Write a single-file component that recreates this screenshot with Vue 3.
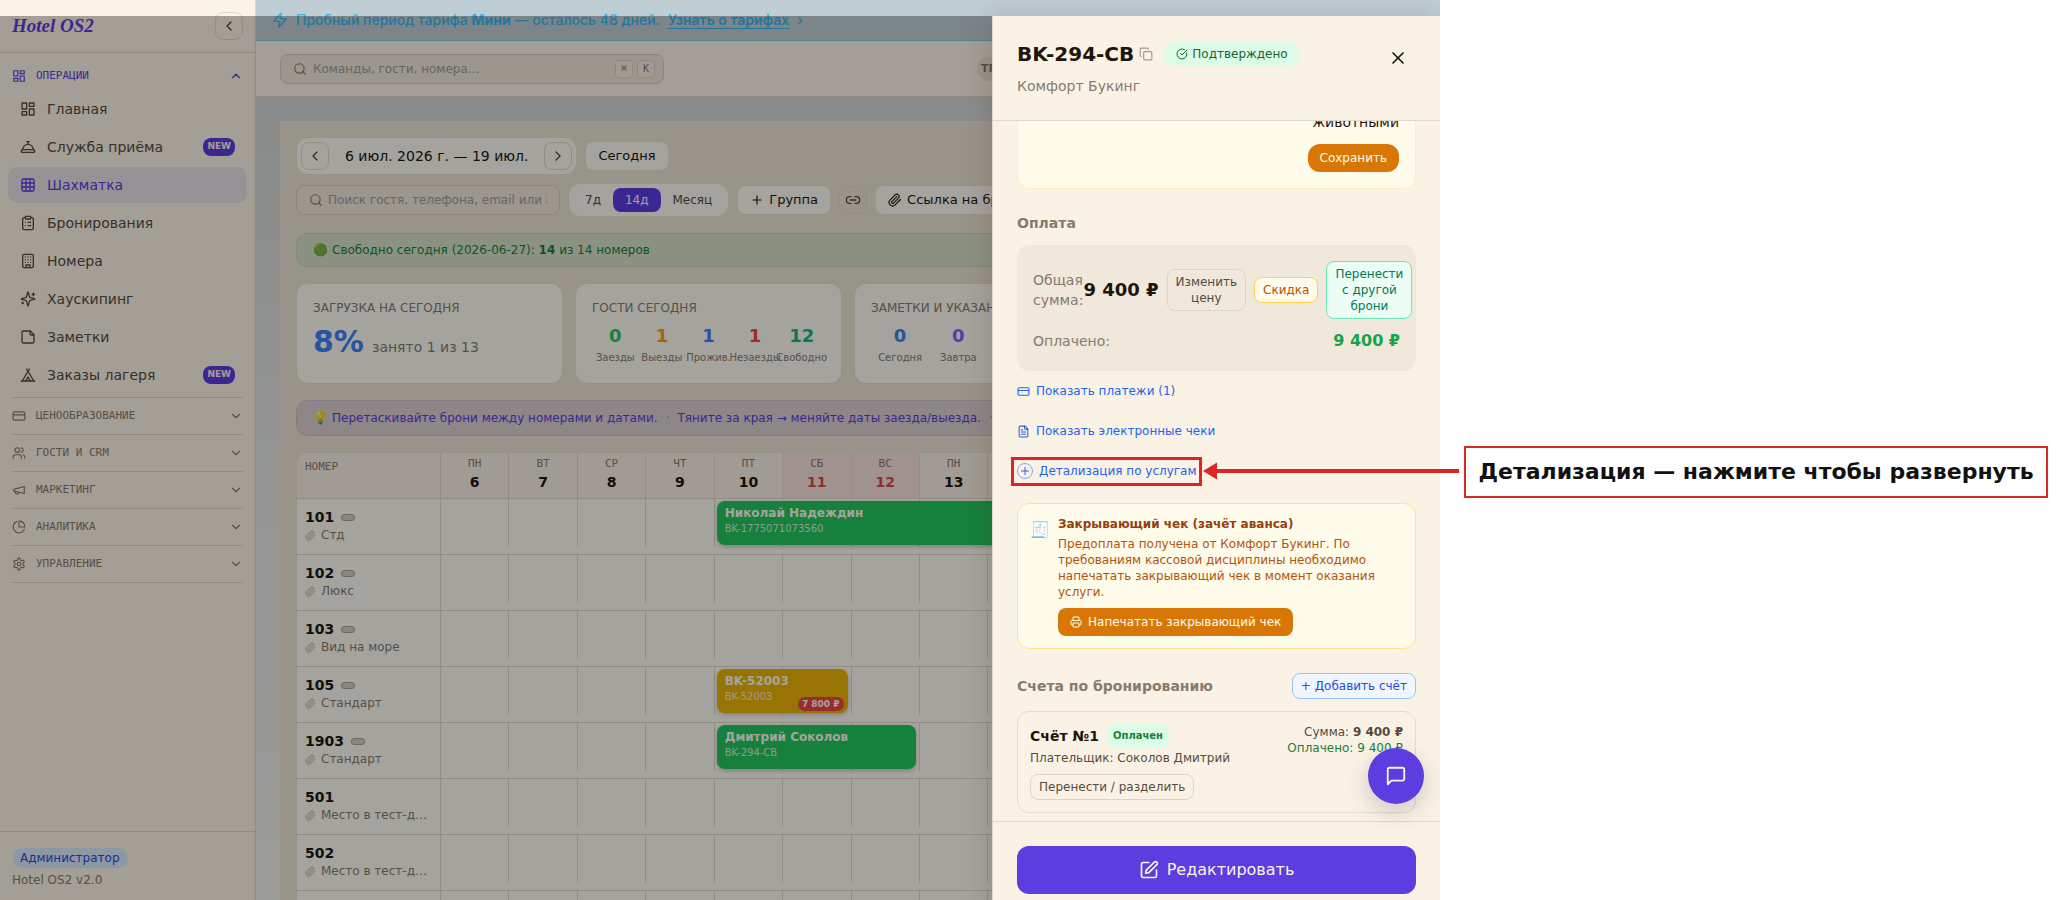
<template>
    <div class="page">
        <div class="app">
            <aside class="sidebar">
                <div class="brand">
                    <span class="logo">Hotel OS2</span>
                    <button class="icon-btn" aria-label="Свернуть меню">
                        <Icon name="chevronLeft" :size="16" />
                    </button>
                </div>
                <nav class="nav">
                    <button class="section-head first">
                        <Icon name="dashboard" :size="14" />
                        <span>ОПЕРАЦИИ</span>
                        <Icon name="chevronUp" :size="14" />
                    </button>
                    <ul class="nav-list">
                        <li v-for="item in navItems" :key="item.label">
                            <a href="#" class="nav-item" :class="{ active: item.active }">
                                <Icon :name="item.icon" :size="16" />
                                <span>{{ item.label }}</span>
                                <b v-if="item.isNew" class="new">NEW</b>
                            </a>
                        </li>
                    </ul>
                    <button v-for="s in sections" :key="s.label" class="section-head">
                        <Icon :name="s.icon" :size="14" />
                        <span>{{ s.label }}</span>
                        <Icon name="chevronDown" :size="14" />
                    </button>
                </nav>
                <div class="side-footer">
                    <span class="role">Администратор</span>
                    <p>Hotel OS2 v2.0</p>
                </div>
            </aside>

            <div class="content">
                <div class="trial">
                    <Icon name="zap" :size="16" />
                    <p>Пробный период тарифа <b>Мини</b> — осталось 48 дней.</p>
                    <a href="#">Узнать о тарифах</a>
                    <span>›</span>
                </div>
                <header class="topbar">
                    <label class="search top-search">
                        <Icon name="search" :size="14" />
                        <input type="text" aria-label="Поиск" placeholder="Команды, гости, номера..." />
                        <span class="keys"><kbd>⌘</kbd><kbd>K</kbd></span>
                    </label>
                    <span class="plan">ТРИАЛ</span>
                </header>

                <main class="main">
                    <div class="panel">
                        <div class="toolbar">
                            <div class="date-nav">
                                <button class="icon-btn" aria-label="Назад">
                                    <Icon name="chevronLeft" :size="16" />
                                </button>
                                <span>6 июл. 2026 г. — 19 июл.</span>
                                <button class="icon-btn" aria-label="Вперёд">
                                    <Icon name="chevronRight" :size="16" />
                                </button>
                            </div>
                            <button class="btn">Сегодня</button>
                        </div>
                        <div class="toolbar filters">
                            <label class="search guest-search">
                                <Icon name="search" :size="14" />
                                <input
                                    type="text"
                                    aria-label="Поиск гостя"
                                    placeholder="Поиск гостя, телефона, email или № брони"
                                />
                            </label>
                            <div class="segmented">
                                <button
                                    v-for="r in ranges"
                                    :key="r"
                                    :class="{ active: r === range }"
                                    @click="range = r"
                                >
                                    {{ r }}
                                </button>
                            </div>
                            <button class="btn"><Icon name="plus" :size="14" />Группа</button>
                            <button class="icon-btn" aria-label="Ссылка">
                                <Icon name="link" :size="16" />
                            </button>
                            <button class="btn"><Icon name="clip" :size="14" />Ссылка на бронь</button>
                        </div>

                        <div class="notice free">
                            <span class="emoji">🟢</span>
                            <p>Свободно сегодня (2026-06-27): <b>14</b> из 14 номеров</p>
                        </div>

                        <div class="cards">
                            <section class="card">
                                <h3>ЗАГРУЗКА НА СЕГОДНЯ</h3>
                                <p class="load"><b>8%</b> занято 1 из 13</p>
                            </section>
                            <section v-for="c in cards" :key="c.title" class="card">
                                <h3>{{ c.title }}</h3>
                                <div class="stats">
                                    <div v-for="s in c.stats" :key="s.label" class="stat">
                                        <b :class="s.tone">{{ s.value }}</b>
                                        <span>{{ s.label }}</span>
                                    </div>
                                </div>
                            </section>
                            <section class="card"></section>
                        </div>

                        <div class="notice hint">
                            <span class="emoji">💡</span>
                            <p>Перетаскивайте брони между номерами и датами.</p>
                            <i>·</i>
                            <p>Тяните за края → меняйте даты заезда/выезда.</p>
                            <i>·</i>
                        </div>

                        <div class="board">
                            <table>
                                <thead>
                                    <tr>
                                        <th class="room-col">НОМЕР</th>
                                        <th v-for="d in days" :key="d.num" :class="{ weekend: d.weekend }">
                                            <span>{{ d.name }}</span>
                                            <b>{{ d.num }}</b>
                                        </th>
                                    </tr>
                                </thead>
                                <tbody>
                                    <tr v-for="(room, i) in rooms" :key="i">
                                        <td class="room-col">
                                            <template v-if="room.num">
                                                <div class="room-num">
                                                    {{ room.num }}<i v-if="room.beds" class="beds"></i>
                                                </div>
                                                <div class="room-type">
                                                    <Icon name="clip" :size="11" />
                                                    <span>{{ room.type }}</span>
                                                </div>
                                            </template>
                                        </td>
                                        <td v-for="d in days" :key="d.num" class="day">
                                            <div class="slot"></div>
                                            <div
                                                v-if="room.booking && room.booking.from === d.num"
                                                class="booking"
                                                :class="room.booking.tone"
                                                :style="{ width: `calc(${room.booking.days * 100}% - 6px)` }"
                                            >
                                                <b>{{ room.booking.guest }}</b>
                                                <span>{{ room.booking.code }}</span>
                                                <em v-if="room.booking.debt">{{ room.booking.debt }}</em>
                                            </div>
                                        </td>
                                    </tr>
                                </tbody>
                            </table>
                        </div>
                    </div>
                </main>
            </div>

            <div class="overlay"></div>

            <section class="drawer" role="dialog" aria-label="Бронирование BK-294-CB">
                <header class="drawer-head">
                    <div>
                        <div class="title-row">
                            <h2>BK-294-CB</h2>
                            <button class="plain" aria-label="Копировать">
                                <Icon name="copy" :size="14" />
                            </button>
                            <span class="status"><Icon name="checkCircle" :size="12" />Подтверждено</span>
                        </div>
                        <p>Комфорт Букинг</p>
                    </div>
                    <button class="plain close" aria-label="Закрыть"><Icon name="x" :size="20" /></button>
                </header>

                <div class="drawer-body">
                    <div class="comment">
                        <p>животными</p>
                        <button class="amber-btn round">Сохранить</button>
                    </div>

                    <h3 class="block-title pay-title">Оплата</h3>
                    <div class="payment">
                        <div class="pay-row">
                            <span>Общая сумма:</span>
                            <div class="pay-actions">
                                <b>9 400 ₽</b>
                                <button class="small-btn">Изменить цену</button>
                                <button class="small-btn discount">Скидка</button>
                                <button class="small-btn transfer">Перенести с другой брони</button>
                            </div>
                        </div>
                        <div class="pay-row paid">
                            <span>Оплачено:</span>
                            <b>9 400 ₽</b>
                        </div>
                    </div>

                    <div class="links">
                        <button class="text-link"><Icon name="card" :size="13" />Показать платежи (1)</button>
                        <button class="text-link"><Icon name="file" :size="13" />Показать электронные чеки</button>
                        <button class="text-link marked">
                            <Icon class="ring" name="plus" :size="12" />Детализация по услугам
                        </button>
                    </div>

                    <div class="receipt">
                        <span class="receipt-icon">🧾</span>
                        <div>
                            <h4>Закрывающий чек (зачёт аванса)</h4>
                            <p>
                                Предоплата получена от Комфорт Букинг. По требованиям кассовой дисциплины
                                необходимо напечатать закрывающий чек в момент оказания услуги.
                            </p>
                            <button class="amber-btn">
                                <Icon name="printer" :size="12" />Напечатать закрывающий чек
                            </button>
                        </div>
                    </div>

                    <div class="invoices-head">
                        <h3 class="block-title">Счета по бронированию</h3>
                        <button class="small-btn add">+ Добавить счёт</button>
                    </div>
                    <div class="invoice">
                        <div>
                            <div class="invoice-title">
                                <b>Счёт №1</b>
                                <span class="paid-badge">Оплачен</span>
                            </div>
                            <p>Плательщик: Соколов Дмитрий</p>
                            <button class="small-btn">Перенести / разделить</button>
                        </div>
                        <div class="invoice-sum">
                            <p>Сумма: <b>9 400 ₽</b></p>
                            <p class="green">Оплачено: 9 400 ₽</p>
                        </div>
                    </div>
                </div>

                <footer class="drawer-foot">
                    <button class="primary"><Icon name="edit" :size="20" />Редактировать</button>
                </footer>
            </section>

            <button class="chat" aria-label="Чат"><Icon name="chat" :size="22" /></button>
        </div>

        <aside class="notes">
            <div class="callout">
                <svg class="arrow" viewBox="0 0 256 18" aria-hidden="true">
                    <path d="M0 9 14 0.5v17z" />
                    <path d="M13 7h243v4H13z" />
                </svg>
                Детализация — нажмите чтобы развернуть
            </div>
        </aside>
    </div>
</template>

<script setup>
import { h, ref } from "vue";

// Контуры иконок в сетке 24x24
const icons = {
    chevronLeft: ["m15 18-6-6 6-6"],
    chevronRight: ["m9 18 6-6-6-6"],
    chevronUp: ["m18 15-6-6-6 6"],
    chevronDown: ["m6 9 6 6 6-6"],
    dashboard: ["M3 3h7v9H3z", "M14 3h7v5h-7z", "M14 12h7v9h-7z", "M3 16h7v5H3z"],
    bell: ["M3 20a1 1 0 0 1-1-1v-1a2 2 0 0 1 2-2h16a2 2 0 0 1 2 2v1a1 1 0 0 1-1 1Z", "M20 16a8 8 0 1 0-16 0", "M12 4v4", "M10 4h4"],
    grid: ["M5 3h14a2 2 0 0 1 2 2v14a2 2 0 0 1-2 2H5a2 2 0 0 1-2-2V5a2 2 0 0 1 2-2z", "M3 9h18", "M3 15h18", "M9 3v18", "M15 3v18"],
    clipboard: ["M9 2h6a1 1 0 0 1 1 1v2a1 1 0 0 1-1 1H9a1 1 0 0 1-1-1V3a1 1 0 0 1 1-1z", "M16 4h2a2 2 0 0 1 2 2v14a2 2 0 0 1-2 2H6a2 2 0 0 1-2-2V6a2 2 0 0 1 2-2h2", "M12 11h4", "M12 16h4", "M8 11h.01", "M8 16h.01"],
    building: ["M6 2h12a2 2 0 0 1 2 2v16a2 2 0 0 1-2 2H6a2 2 0 0 1-2-2V4a2 2 0 0 1 2-2z", "M9 22v-4h6v4", "M8 6h.01", "M16 6h.01", "M12 6h.01", "M12 10h.01", "M12 14h.01", "M16 10h.01", "M16 14h.01", "M8 10h.01", "M8 14h.01"],
    sparkles: ["M9.9 15.5A2 2 0 0 0 8.5 14.1l-6.1-1.6a.5.5 0 0 1 0-1L8.5 9.9A2 2 0 0 0 9.9 8.5l1.6-6.1a.5.5 0 0 1 1 0l1.6 6.1a2 2 0 0 0 1.4 1.4l6.1 1.6a.5.5 0 0 1 0 1l-6.1 1.6a2 2 0 0 0-1.4 1.4l-1.6 6.1a.5.5 0 0 1-1 0z", "M20 3v4", "M22 5h-4", "M4 17v2", "M5 18H3"],
    note: ["M15.5 3H5a2 2 0 0 0-2 2v14a2 2 0 0 0 2 2h14a2 2 0 0 0 2-2V8.5z", "M15 3v4a2 2 0 0 0 2 2h4"],
    tent: ["M3.5 21 14 3", "M20.5 21 10 3", "M15.5 21 12 15l-3.5 6", "M2 21h20"],
    card: ["M4 5h16a2 2 0 0 1 2 2v10a2 2 0 0 1-2 2H4a2 2 0 0 1-2-2V7a2 2 0 0 1 2-2z", "M2 10h20"],
    users: ["M16 21v-2a4 4 0 0 0-4-4H6a4 4 0 0 0-4 4v2", "M13 7a4 4 0 1 1-8 0 4 4 0 0 1 8 0z", "M22 21v-2a4 4 0 0 0-3-3.9", "M16 3.1a4 4 0 0 1 0 7.8"],
    megaphone: ["m3 11 18-5v12L3 14z", "M11.6 16.8a3 3 0 1 1-5.8-1.6"],
    pie: ["M21 12a1 1 0 0 0 1-1 10 10 0 0 0-9-9 1 1 0 0 0-1 1v8a1 1 0 0 0 1 1z", "M21.2 15.9A10 10 0 1 1 8 2.8"],
    gear: ["M12.2 2h-.4a2 2 0 0 0-2 2v.2a2 2 0 0 1-1 1.7l-.4.3a2 2 0 0 1-2 0l-.2-.1a2 2 0 0 0-2.7.7l-.2.4a2 2 0 0 0 .7 2.7l.2.1a2 2 0 0 1 1 1.7v.6a2 2 0 0 1-1 1.7l-.2.1a2 2 0 0 0-.7 2.7l.2.4a2 2 0 0 0 2.7.7l.2-.1a2 2 0 0 1 2 0l.4.3a2 2 0 0 1 1 1.7v.2a2 2 0 0 0 2 2h.4a2 2 0 0 0 2-2v-.2a2 2 0 0 1 1-1.7l.4-.3a2 2 0 0 1 2 0l.2.1a2 2 0 0 0 2.7-.7l.2-.4a2 2 0 0 0-.7-2.7l-.2-.1a2 2 0 0 1-1-1.7v-.6a2 2 0 0 1 1-1.7l.2-.1a2 2 0 0 0 .7-2.7l-.2-.4a2 2 0 0 0-2.7-.7l-.2.1a2 2 0 0 1-2 0l-.4-.3a2 2 0 0 1-1-1.7V4a2 2 0 0 0-2-2z", "M15 12a3 3 0 1 1-6 0 3 3 0 0 1 6 0z"],
    zap: ["M4 14a1 1 0 0 1-.8-1.6l9.9-10.2a.5.5 0 0 1 .9.5l-2 6A1 1 0 0 0 13 10h7a1 1 0 0 1 .8 1.6l-9.9 10.2a.5.5 0 0 1-.9-.5l2-6A1 1 0 0 0 11 14z"],
    search: ["M19 11a8 8 0 1 1-16 0 8 8 0 0 1 16 0z", "m21 21-4.3-4.3"],
    plus: ["M5 12h14", "M12 5v14"],
    link: ["M9 17H7A5 5 0 0 1 7 7h2", "M15 7h2a5 5 0 1 1 0 10h-2", "M8 12h8"],
    clip: ["m21.4 11.1-9.2 9.2a6 6 0 0 1-8.5-8.5l8.6-8.6a4 4 0 1 1 5.7 5.7l-8.6 8.6a2 2 0 0 1-2.8-2.8l8.5-8.5"],
    copy: ["M10 8h10a2 2 0 0 1 2 2v10a2 2 0 0 1-2 2H10a2 2 0 0 1-2-2V10a2 2 0 0 1 2-2z", "M4 16a2 2 0 0 1-2-2V4a2 2 0 0 1 2-2h10a2 2 0 0 1 2 2"],
    checkCircle: ["M21.8 10A10 10 0 1 1 17 3.3", "m9 11 3 3L22 4"],
    x: ["M18 6 6 18", "m6 6 12 12"],
    file: ["M15 2H6a2 2 0 0 0-2 2v16a2 2 0 0 0 2 2h12a2 2 0 0 0 2-2V7z", "M14 2v4a2 2 0 0 0 2 2h4", "M10 9H8", "M16 13H8", "M16 17H8"],
    printer: ["M6 18H4a2 2 0 0 1-2-2v-5a2 2 0 0 1 2-2h16a2 2 0 0 1 2 2v5a2 2 0 0 1-2 2h-2", "M6 9V3a1 1 0 0 1 1-1h10a1 1 0 0 1 1 1v6", "M7 14h10a1 1 0 0 1 1 1v6a1 1 0 0 1-1 1H7a1 1 0 0 1-1-1v-6a1 1 0 0 1 1-1z"],
    edit: ["M12 3H5a2 2 0 0 0-2 2v14a2 2 0 0 0 2 2h14a2 2 0 0 0 2-2v-7", "M18.4 2.6a2.1 2.1 0 0 1 3 3l-9 9a2 2 0 0 1-.9.5l-2.9.8a.5.5 0 0 1-.6-.6l.8-2.9a2 2 0 0 1 .5-.9z"],
    chat: ["M21 15a2 2 0 0 1-2 2H7l-4 4V5a2 2 0 0 1 2-2h14a2 2 0 0 1 2 2z"],
};

const Icon = (props) =>
    h(
        "svg",
        {
            width: props.size,
            height: props.size,
            viewBox: "0 0 24 24",
            fill: "none",
            stroke: "currentColor",
            "stroke-width": 2,
            "stroke-linecap": "round",
            "stroke-linejoin": "round",
            "aria-hidden": "true",
        },
        icons[props.name].map((d) => h("path", { d }))
    );
Icon.props = ["name", "size"];

const navItems = [
    { label: "Главная", icon: "dashboard" },
    { label: "Служба приёма", icon: "bell", isNew: true },
    { label: "Шахматка", icon: "grid", active: true },
    { label: "Бронирования", icon: "clipboard" },
    { label: "Номера", icon: "building" },
    { label: "Хаускипинг", icon: "sparkles" },
    { label: "Заметки", icon: "note" },
    { label: "Заказы лагеря", icon: "tent", isNew: true },
];

const sections = [
    { label: "ЦЕНООБРАЗОВАНИЕ", icon: "card" },
    { label: "ГОСТИ И CRM", icon: "users" },
    { label: "МАРКЕТИНГ", icon: "megaphone" },
    { label: "АНАЛИТИКА", icon: "pie" },
    { label: "УПРАВЛЕНИЕ", icon: "gear" },
];

const ranges = ["7д", "14д", "Месяц"];
const range = ref("14д");

const cards = [
    {
        title: "ГОСТИ СЕГОДНЯ",
        stats: [
            { value: 0, label: "Заезды", tone: "t-green" },
            { value: 1, label: "Выезды", tone: "t-amber" },
            { value: 1, label: "Прожив.", tone: "t-blue" },
            { value: 1, label: "Незаезды", tone: "t-red" },
            { value: 12, label: "Свободно", tone: "t-teal" },
        ],
    },
    {
        title: "ЗАМЕТКИ И УКАЗАНИЯ",
        stats: [
            { value: 0, label: "Сегодня", tone: "t-blue" },
            { value: 0, label: "Завтра", tone: "t-violet" },
            { value: 0, label: "Важные", tone: "t-red" },
            { value: 0, label: "Всего", tone: "t-green" },
        ],
    },
];

// Две недели, начиная с понедельника 6 июля
const weekDays = ["ПН", "ВТ", "СР", "ЧТ", "ПТ", "СБ", "ВС"];
const days = Array.from({ length: 14 }, (_, i) => ({
    num: i + 6,
    name: weekDays[i % 7],
    weekend: i % 7 > 4,
}));

const rooms = [
    { num: "101", type: "Стд", beds: true, booking: { from: 10, days: 6, guest: "Николай Надеждин", code: "BK-1775071073560", tone: "confirmed" } },
    { num: "102", type: "Люкс", beds: true },
    { num: "103", type: "Вид на море", beds: true },
    { num: "105", type: "Стандарт", beds: true, booking: { from: 10, days: 2, guest: "BK-52003", code: "BK-52003", tone: "pending", debt: "7 800 ₽" } },
    { num: "1903", type: "Стандарт", beds: true, booking: { from: 10, days: 3, guest: "Дмитрий Соколов", code: "BK-294-CB", tone: "confirmed" } },
    { num: "501", type: "Место в тест-домике" },
    { num: "502", type: "Место в тест-домике" },
    {},
];
</script>

<style>
body {
    margin: 0;
    background: #fff;
}
</style>

<style scoped>
.page {
    display: grid;
    grid-template-columns: minmax(0, 1fr) 631px;
    height: 100vh;
    overflow: hidden;
    font-family: "DejaVu Sans", sans-serif;
    font-size: 12px;
    line-height: 16px;
    color: #1c160d;
}

.page * {
    box-sizing: border-box;
}

h2,
h3,
h4,
p,
ul {
    margin: 0;
    padding: 0;
}

ul {
    list-style: none;
}

button,
input {
    font: inherit;
    color: inherit;
    margin: 0;
    padding: 0;
    border: 0;
    background: none;
}

button {
    cursor: pointer;
}

svg {
    flex: none;
}

.app {
    position: relative;
    display: flex;
    min-width: 0;
    height: 100vh;
    overflow: hidden;
    background: linear-gradient(#cfd4d3, #e2e3e4 50%, #f2f1ee);
}

.icon-btn {
    display: flex;
    align-items: center;
    justify-content: center;
    flex: none;
    width: 28px;
    height: 28px;
    border: 1px solid #e0d9cd;
    border-radius: 8px;
    color: #544b3f;
}

/* Боковое меню */
.sidebar {
    display: flex;
    flex-direction: column;
    flex: none;
    width: 256px;
    border-right: 1px solid #e0d8cc;
    background: #fbf3e6;
}

.brand {
    display: flex;
    align-items: center;
    justify-content: space-between;
    padding: 12px;
    border-bottom: 1px solid #e0d8cc;
}

.logo {
    font: italic bold 19px/28px "Liberation Serif", serif;
    color: #5b3de0;
}

.nav {
    flex: 1;
    padding: 8px 12px;
}

.section-head {
    display: flex;
    align-items: center;
    gap: 10px;
    width: 100%;
    height: 37px;
    border-bottom: 1px solid #e0d8cc;
    font-family: "DejaVu Sans Mono", monospace;
    font-size: 11px;
    text-align: left;
    color: #857b6e;
}

.section-head span {
    flex: 1;
}

.section-head.first {
    height: 30px;
    border-bottom: 0;
    color: #5b3de0;
}

.nav-list {
    display: flex;
    flex-direction: column;
    gap: 2px;
    margin: 0 -4px;
    padding-bottom: 4px;
}

.nav-list + .section-head {
    height: 38px;
    border-top: 1px solid #e0d8cc;
}

.nav-item {
    display: flex;
    align-items: center;
    gap: 11px;
    height: 36px;
    padding: 0 12px;
    border-radius: 10px;
    font-size: 14px;
    color: #544b3f;
    text-decoration: none;
}

.nav-item span {
    flex: 1;
}

.nav-item.active {
    background: #e8e0e6;
    color: #5b3de0;
}

.new {
    padding: 0 4px 2px;
    border-radius: 8px;
    background: #5b3de0;
    font-size: 9px;
    color: #fbf3e6;
}

.side-footer {
    padding: 16px 12px 12px;
    border-top: 1px solid #e0d8cc;
    color: #857b6e;
}

.side-footer p {
    margin-top: 4px;
}

.role {
    display: inline-block;
    padding: 2px 8px;
    border-radius: 10px;
    background: #dbeafe;
    color: #1d4ed8;
}

/* Основная область */
.content {
    flex: 1;
    min-width: 0;
}

.trial {
    display: flex;
    align-items: center;
    gap: 8px;
    height: 41px;
    padding: 0 16px;
    border-bottom: 1px solid #7fc8ea;
    background: #bfcdd4;
    font-family: Inter, sans-serif;
    font-size: 14px;
    font-weight: 500;
    color: #38b6f0;
}

.trial a {
    color: inherit;
    font-weight: 600;
    text-underline-offset: 3px;
}

.topbar {
    display: flex;
    align-items: center;
    justify-content: space-between;
    height: 56px;
    padding: 0 24px;
    border-bottom: 1px solid #dfd3c5;
    background: #fbf3e8;
}

.search {
    display: flex;
    align-items: center;
    gap: 6px;
    height: 30px;
    padding: 0 12px;
    border: 1px solid #d6cdc0;
    border-radius: 8px;
    background: #efe6da;
    color: #857b6e;
}

.search input {
    flex: 1;
    min-width: 0;
    outline: none;
}

.search input::placeholder {
    color: #a09ba0;
    opacity: 1;
}

.top-search {
    width: 384px;
    padding-right: 8px;
}

.keys {
    display: flex;
    gap: 4px;
}

kbd {
    width: 18px;
    height: 18px;
    border: 1px solid #ddd4c7;
    border-radius: 4px;
    background: #f7efe3;
    font-family: "DejaVu Sans Mono", monospace;
    font-size: 10px;
    text-align: center;
}

.plan {
    width: 439px;
    padding: 4px;
    border-radius: 12px;
    background: #ebe3d6;
    font-size: 11px;
    font-weight: bold;
    color: #857b6e;
}

.main {
    padding: 24px;
}

.panel {
    padding: 16px;
    background: #ece4d5;
}

.toolbar {
    display: flex;
    align-items: center;
    gap: 8px;
    white-space: nowrap;
}

.date-nav {
    display: flex;
    align-items: center;
    gap: 16px;
    padding: 4px;
    border: 1px solid #e8e0d1;
    border-radius: 12px;
    background: #fdfbf3;
    font-size: 14px;
}

.filters {
    margin-top: 8px;
}

.btn {
    display: flex;
    align-items: center;
    gap: 5px;
    height: 30px;
    padding: 0 12px;
    border: 1px solid #e8e0d1;
    border-radius: 8px;
    background: #fdfbf3;
    font-size: 13px;
}

.guest-search {
    gap: 5px;
    width: 264px;
}

.segmented {
    display: flex;
    padding: 4px;
    border: 1px solid #e8e0d1;
    border-radius: 12px;
    background: #fdfbf3;
    color: #544b3f;
}

.segmented button {
    height: 24px;
    padding: 0 12px;
    border-radius: 8px;
}

.segmented .active {
    background: #5b3de0;
    color: #fbf3e6;
}

.notice {
    display: flex;
    align-items: center;
    gap: 4px;
    height: 34px;
    margin-top: 16px;
    padding: 0 16px;
    border: 1px solid #c9cfb6;
    border-radius: 12px;
    white-space: nowrap;
}

.free {
    background: #d7e1c6;
    color: #15803d;
}

.hint {
    height: 36px;
    border-color: #c9bdc6;
    background: #dacfd1;
    color: #5b3de0;
}

.hint i {
    margin: 0 4px;
    opacity: 0.6;
}

.cards {
    display: grid;
    grid-template-columns: repeat(4, minmax(0, 1fr));
    gap: 12px;
    margin-top: 16px;
}

.card {
    height: 101px;
    padding: 16px;
    border: 1px solid #e8e0d1;
    border-radius: 12px;
    background: #fdfbf3;
    color: #857b6e;
}

.card h3 {
    font-size: 12px;
    font-weight: normal;
    white-space: nowrap;
}

.load {
    display: flex;
    align-items: baseline;
    gap: 8px;
    margin-top: 8px;
    font-size: 14px;
    line-height: 36px;
}

.load b {
    font-size: 30px;
    color: #3b82f6;
}

.stats {
    display: grid;
    grid-auto-flow: column;
    grid-auto-columns: minmax(0, 1fr);
    margin-top: 8px;
}

.stat {
    display: flex;
    flex-direction: column;
    align-items: center;
    gap: 2px;
    font-size: 10px;
}

.stat b {
    font-size: 18px;
    line-height: 24px;
}

.t-green { color: #22c55e; }
.t-amber { color: #f59e0b; }
.t-blue { color: #3b82f6; }
.t-red { color: #ef4444; }
.t-teal { color: #10b981; }
.t-violet { color: #8b5cf6; }

/* Шахматка */
.board {
    margin-top: 16px;
    border: 1px solid #e8e0d1;
    border-radius: 12px 12px 0 0;
    overflow: hidden;
    background: #fdfbf3;
}

table {
    width: 100%;
    table-layout: fixed;
    border-collapse: separate;
    border-spacing: 0;
}

th {
    height: 46px;
    padding: 3px 0 0;
    border-right: 1px solid #e0d9cc;
    border-bottom: 1px solid #e0d9cc;
    background: #f6efe4;
    font-family: "DejaVu Sans Mono", monospace;
    font-size: 11px;
    font-weight: normal;
    vertical-align: top;
    color: #857b6e;
}

th span,
th b {
    display: block;
}

th b {
    margin-top: 2px;
    font-family: "DejaVu Sans", sans-serif;
    font-size: 14px;
    color: #1c160d;
}

th.weekend {
    background: #f6e0da;
}

th.weekend b {
    color: #e04444;
}

.room-col {
    width: 144px;
    padding: 6px 8px;
    text-align: left;
}

td {
    position: relative;
    height: 56px;
    padding: 0;
    border-bottom: 1px solid #e0d9cc;
    vertical-align: top;
}

td.room-col {
    padding: 10px 8px 0;
    border-right: 1px solid #e0d9cc;
}

.room-num {
    display: flex;
    align-items: center;
    gap: 7px;
    font-size: 14px;
    font-weight: bold;
}

.beds {
    width: 14px;
    height: 7px;
    border: 1px solid #aaa59c;
    border-radius: 3px;
    background: #d3cfc6;
}

.room-type {
    display: flex;
    align-items: center;
    gap: 5px;
    margin-top: 2px;
    color: #857b6e;
}

.room-type svg {
    opacity: 0.7;
}

.room-type span {
    width: 106px;
    overflow: hidden;
    text-overflow: ellipsis;
    white-space: nowrap;
}

.slot {
    height: 48px;
    border-right: 1px solid #e0d9cc;
}

.booking {
    position: absolute;
    z-index: 1;
    top: 2px;
    left: 2px;
    height: 44px;
    padding: 4px 8px;
    border-radius: 8px;
    box-shadow: 0 2px 4px rgba(0, 0, 0, 0.2);
    white-space: nowrap;
    color: #fdfbf3;
}

.booking b,
.booking span {
    display: block;
}

.booking span {
    font-size: 10px;
    opacity: 0.8;
}

.booking em {
    position: absolute;
    right: 4px;
    bottom: 2px;
    padding: 0 4px;
    border-radius: 7px;
    background: #ef4444;
    font-size: 9px;
    font-style: normal;
    font-weight: bold;
    line-height: 14px;
}

.confirmed {
    background: #22c55e;
}

.pending {
    background: #eab308;
}

.overlay {
    position: absolute;
    z-index: 2;
    inset: 16px 0 0;
    background: rgba(0, 0, 0, 0.35);
}

/* Карточка бронирования */
.drawer {
    position: absolute;
    z-index: 3;
    top: 16px;
    right: 0;
    display: flex;
    flex-direction: column;
    width: 448px;
    height: calc(100vh + 2px);
    border-left: 1px solid #ded7ca;
    background: #faf3e5;
    box-shadow: -4px 0 24px rgba(60, 30, 10, 0.15);
}

.drawer-head {
    display: flex;
    justify-content: space-between;
    align-items: flex-start;
    padding: 24px;
    border-bottom: 1px solid #e0d9cc;
    font-size: 14px;
    color: #857b6e;
}

.drawer-head p {
    margin-top: 8px;
    line-height: 20px;
}

.title-row {
    display: flex;
    align-items: center;
    gap: 5px;
}

h2 {
    font-size: 20px;
    line-height: 28px;
    color: #1c160d;
}

.plain {
    display: flex;
    align-items: center;
    justify-content: center;
    color: #a39b8f;
}

.close {
    width: 36px;
    height: 36px;
    color: #1c160d;
}

.status {
    display: flex;
    align-items: center;
    gap: 4px;
    margin-left: 6px;
    padding: 4px 12px;
    border-radius: 12px;
    background: #dcfce7;
    font-size: 12px;
    color: #166534;
}

.drawer-body {
    display: flex;
    flex: 1;
    flex-direction: column;
    justify-content: flex-end;
    min-height: 0;
    padding: 0 24px 8px;
    overflow: hidden;
}

.drawer-body > * {
    flex: none;
}

.comment {
    display: flex;
    flex-direction: column;
    align-items: flex-end;
    gap: 12px;
    padding: 16px;
    border: 1px solid #fdf0c0;
    border-radius: 12px;
    background: #fffbeb;
    font-size: 14px;
    line-height: 20px;
}

.amber-btn {
    display: flex;
    align-items: center;
    gap: 6px;
    height: 28px;
    padding: 0 12px;
    border-radius: 8px;
    background: #d97706;
    font-size: 12px;
    color: #fffbeb;
}

.round {
    border-radius: 12px;
}

.block-title {
    font-size: 14px;
    line-height: 20px;
    color: #857b6e;
}

.pay-title {
    margin: 24px 0 12px;
}

.payment {
    display: flex;
    flex-direction: column;
    gap: 8px;
    padding: 16px;
    border-radius: 12px;
    background: #f0e8db;
}

.pay-row {
    display: flex;
    align-items: center;
    justify-content: space-between;
    font-size: 14px;
    line-height: 20px;
    color: #857b6e;
}

.pay-row b {
    font-size: 18px;
    white-space: nowrap;
    color: #1c160d;
}

.pay-actions {
    display: flex;
    align-items: center;
    gap: 8px;
}

.paid {
    height: 28px;
}

.paid b {
    font-size: 16px;
    color: #16a34a;
}

.small-btn {
    padding: 4px 8px;
    border: 1px solid #ddd5c8;
    border-radius: 8px;
    font-size: 12px;
    line-height: 16px;
    color: #544b3f;
}

.discount {
    border-color: #fcd34d;
    background: #fffbeb;
    color: #b45309;
}

.transfer {
    border-color: #6ee7b7;
    background: #ecfdf5;
    color: #047857;
}

.add {
    border-color: #93c5fd;
    background: #eff6ff;
    color: #1d4ed8;
}

.links {
    display: flex;
    flex-direction: column;
    align-items: flex-start;
    gap: 24px;
    margin: 12px 0 24px;
}

.text-link {
    position: relative;
    display: flex;
    align-items: center;
    gap: 6px;
    height: 16px;
    color: #2563eb;
}

.ring {
    width: 16px;
    height: 16px;
    padding: 1px;
    border: 1px solid #7aa8f5;
    border-radius: 50%;
}

.marked::after {
    content: "";
    position: absolute;
    inset: -6px -5px -7px -6px;
    border: 3px solid #dc2626;
}

.receipt {
    display: flex;
    gap: 10px;
    padding: 12px;
    border: 1px solid #fde68a;
    border-radius: 12px;
    background: #fffbeb;
    color: #b45309;
}

.receipt-icon {
    flex: none;
    width: 18px;
    font-size: 16px;
    line-height: 28px;
}

h4 {
    margin-bottom: 4px;
    font-size: 12px;
    color: #92400e;
}

.receipt .amber-btn {
    margin-top: 8px;
}

.invoices-head {
    display: flex;
    align-items: center;
    justify-content: space-between;
    margin: 24px 0 12px;
}

.invoice {
    display: flex;
    justify-content: space-between;
    padding: 12px;
    border: 1px solid #e3dbcd;
    border-radius: 12px;
    color: #544b3f;
}

.invoice-title {
    display: flex;
    align-items: center;
    gap: 8px;
    margin-bottom: 2px;
    font-size: 14px;
    color: #1c160d;
}

.paid-badge {
    padding: 4px 6px;
    border-radius: 8px;
    background: #dcfce7;
    font-size: 10px;
    font-weight: bold;
    color: #15803d;
}

.invoice .small-btn {
    margin-top: 8px;
}

.invoice-sum {
    text-align: right;
}

.green {
    color: #15803d;
}

.drawer-foot {
    padding: 24px;
    border-top: 1px solid #e0d9cc;
}

.primary {
    display: flex;
    align-items: center;
    justify-content: center;
    gap: 8px;
    width: 100%;
    height: 48px;
    border-radius: 12px;
    background: #5b3de0;
    font-size: 16px;
    color: #faf3e5;
}

.chat {
    position: absolute;
    z-index: 4;
    right: 16px;
    bottom: 96px;
    display: flex;
    align-items: center;
    justify-content: center;
    width: 56px;
    height: 56px;
    border-radius: 50%;
    background: #5b3de0;
    box-shadow: 0 8px 24px rgba(30, 15, 60, 0.2);
    color: #faf3e5;
}

/* Пояснение справа */
.notes {
    padding: 446px 23px 0 24px;
}

.callout {
    position: relative;
    padding: 12px;
    border: 2px solid #dc2626;
    font-size: 22px;
    font-weight: bold;
    line-height: 24px;
    text-align: center;
    white-space: nowrap;
    color: #111;
}

.arrow {
    position: absolute;
    z-index: 5;
    top: 14px;
    right: calc(100% + 7px);
    width: 256px;
    height: 18px;
    fill: #dc2626;
}
</style>
